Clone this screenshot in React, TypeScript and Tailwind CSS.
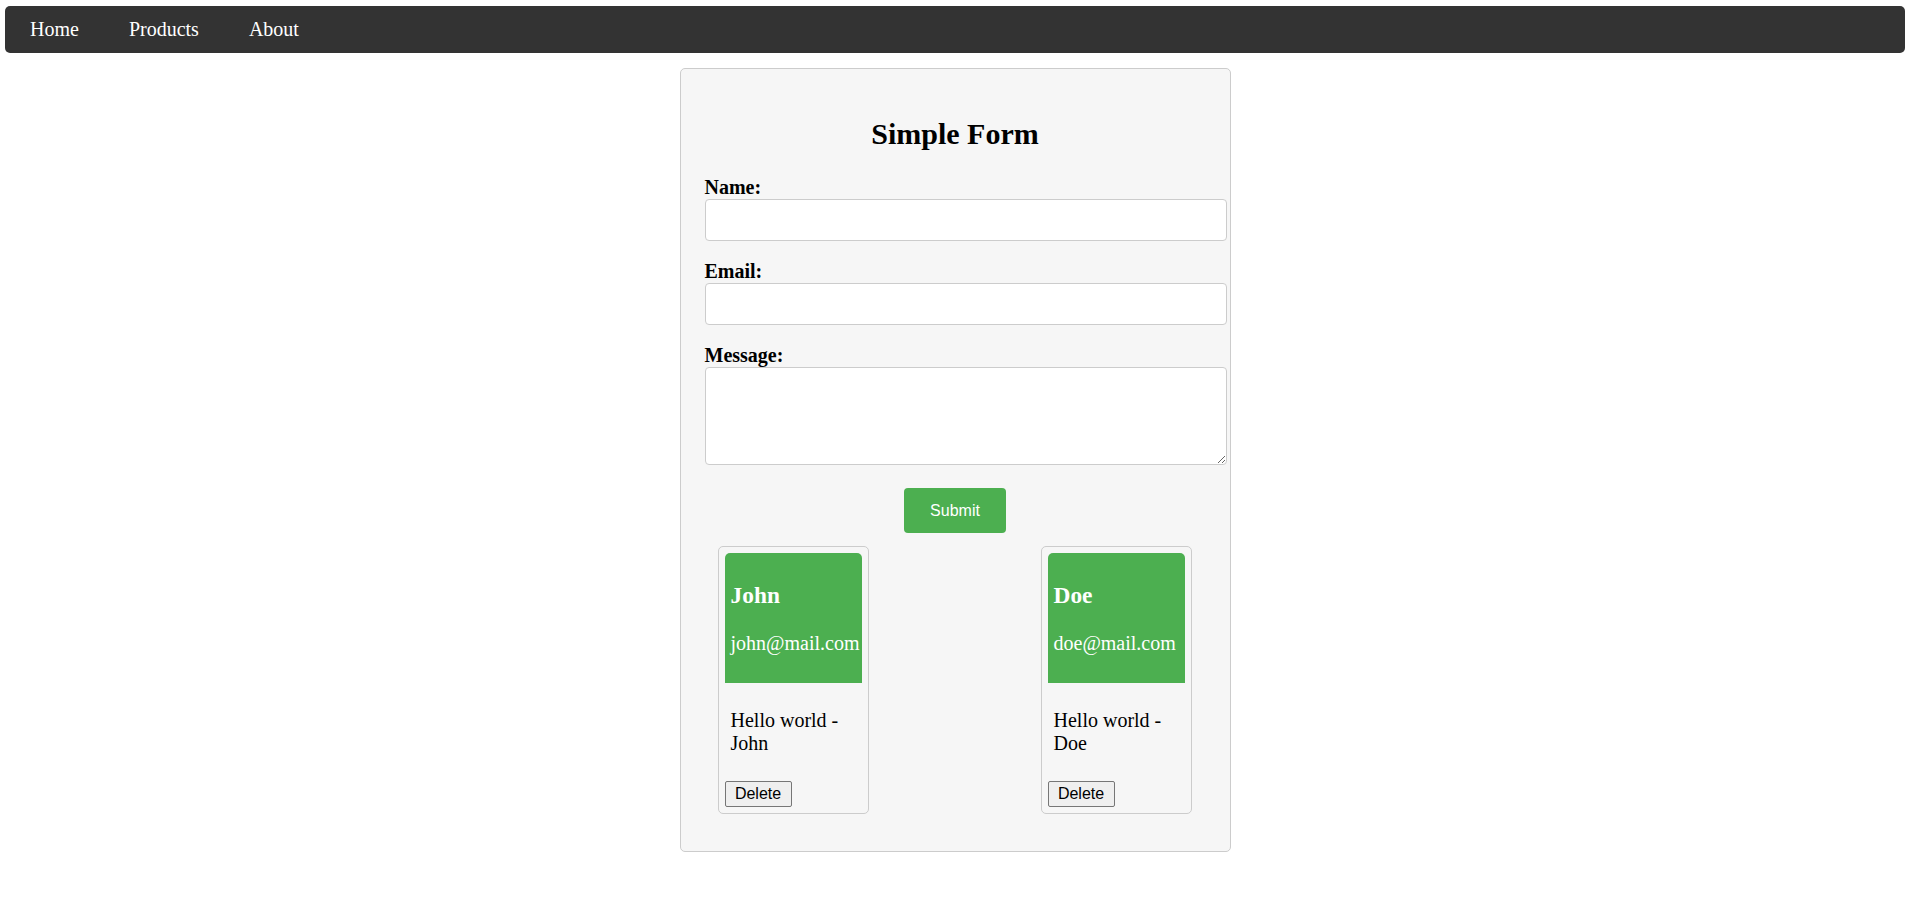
import { useState } from "react";

type Entry = { name: string; email: string; message: string };

const links = ["Home", "Products", "About"];

function Field({ label, area }: { label: string; area?: boolean }) {
  const box =
    "block w-[522px] rounded-[4px] border border-[#ccc] bg-white px-[10px] text-[16px] outline-none";
  return (
    <div className="mb-[19px]">
      <label className="block text-[20px] font-bold leading-[23px] text-black">{label}</label>
      {area ? (
        <textarea className={`${box} h-[98px] py-[10px]`} />
      ) : (
        <input type="text" className={`${box} h-[42px]`} />
      )}
    </div>
  );
}

function Card({ entry, onDelete }: { entry: Entry; onDelete: () => void }) {
  return (
    <div className="w-[151px] rounded-[5px] border border-[#ccc] p-[6px]">
      <div className="h-[130px] w-[137px] rounded-t-[5px] bg-[#4caf50] p-[6px] text-white">
        <h3 className="mt-[23px] text-[23.4px] font-bold leading-[27px]">{entry.name}</h3>
        <p className="mt-[23px] text-[20px] leading-[23px]">{entry.email}</p>
      </div>
      <div className="p-[6px]">
        <p className="my-[20px] text-[20px] leading-[23px] text-black">{entry.message}</p>
      </div>
      <button
        onClick={onDelete}
        className="h-[26px] w-[67px] rounded-[2px] border border-[#767676] bg-[#efefef] text-[16px] leading-[18px] text-black"
        style={{ fontFamily: '"Liberation Sans", Arial, sans-serif' }}
      >
        Delete
      </button>
    </div>
  );
}

export default function App() {
  const [entries, setEntries] = useState<Entry[]>([
    { name: "John", email: "john@mail.com", message: "Hello world - John" },
    { name: "Doe", email: "doe@mail.com", message: "Hello world - Doe" },
  ]);

  return (
    <div
      className="min-h-screen bg-white pl-[5px] pr-[10px] pt-[6px]"
      style={{ fontFamily: '"Liberation Serif", "Times New Roman", serif' }}
    >
      <nav className="flex h-[47px] rounded-[5px] bg-[#333]">
        {links.map((l) => (
          <a key={l} href="#" className="px-[25px] py-[12px] text-[20px] leading-[23px] text-white">
            {l}
          </a>
        ))}
      </nav>

      <div className="mx-auto mt-[15px] w-[551px] rounded-[5px] border border-[#ccc] bg-[#f6f6f6] px-[24px] pb-[37px] pt-[24px]">
        <h2 className="mb-[25px] mt-[24px] text-center text-[30px] font-bold leading-[34px] text-black">
          Simple Form
        </h2>
        <form onSubmit={(e) => e.preventDefault()}>
          <Field label="Name:" />
          <Field label="Email:" />
          <Field label="Message:" area />
          <div className="mt-[23px] flex justify-center">
            <button
              type="submit"
              className="h-[45px] w-[102px] rounded-[4px] bg-[#4caf50] text-[16px] text-white"
              style={{ fontFamily: '"Liberation Sans", Arial, sans-serif' }}
            >
              Submit
            </button>
          </div>
        </form>
        <div className="ml-[13px] mt-[13px] flex w-[474px] justify-between">
          {entries.map((e, i) => (
            <Card key={e.name} entry={e} onDelete={() => setEntries(entries.filter((_, j) => j !== i))} />
          ))}
        </div>
      </div>
    </div>
  );
}
